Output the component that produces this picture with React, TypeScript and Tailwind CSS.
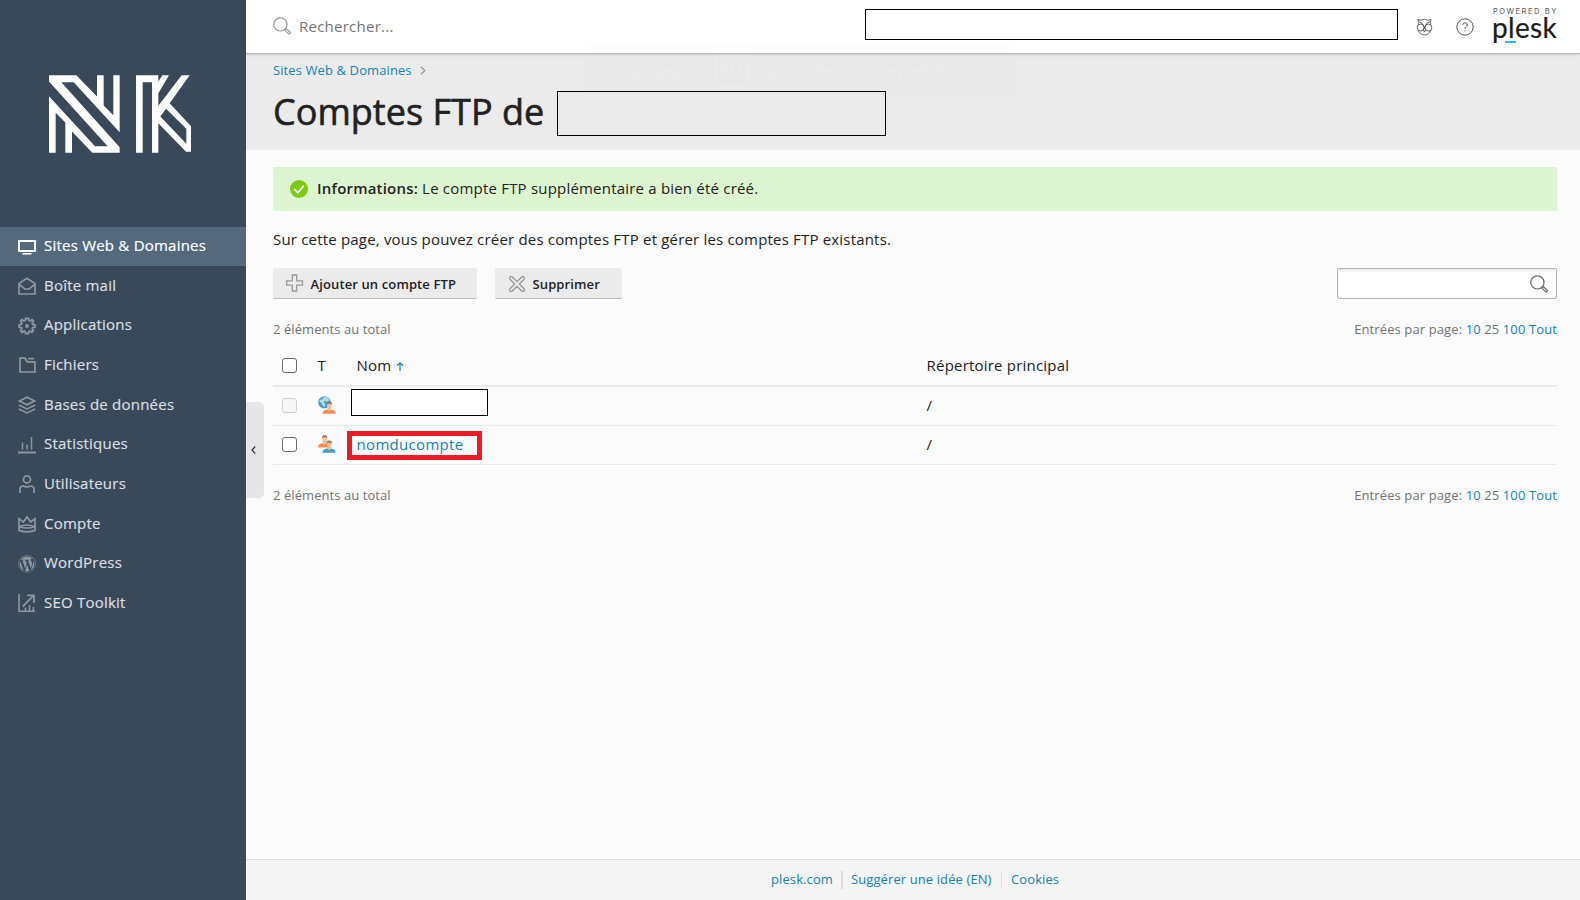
import type { ReactNode } from "react";
import { FaWordpress } from "react-icons/fa";

function Icon({ children, width = 1.7, className = "" }: { children: ReactNode; width?: number; className?: string }) {
  return (
    <svg
      viewBox="0 0 18 18"
      fill="none"
      stroke="currentColor"
      strokeWidth={width}
      className={`h-[18px] w-[18px] shrink-0 ${className}`}
    >
      {children}
    </svg>
  );
}

function Logo() {
  return (
    <svg viewBox="147 106 426 233" className="ml-[49px] h-[78px] w-[142px]" fill="#fff" fillRule="evenodd">
      <path d="M147 106H229L291 170V106H311V197L340 226V106H359V277L221 127H184L359 322V339H277L216 275V339H196V248L167 219V339H147V169L285 319H323L147 125Z" />
      <path d="M408 106H475V125L487 106H507L475 160V198L545 106H569L509 190L573 259V336H558L475 250V339H456V127H428V339H408ZM498 207L481 230L559 312V267Z" />
    </svg>
  );
}

const menu: { label: string; icon: ReactNode }[] = [
  {
    label: "Sites Web & Domaines",
    icon: (
      <Icon>
        <path d="M1 2.9H17V13H1Z" strokeWidth="2" />
        <path d="M4.5 15.8H13.5" strokeWidth="1.6" />
      </Icon>
    ),
  },
  {
    label: "Boîte mail",
    icon: (
      <Icon>
        <path d="M1 6.5L9 1.2L17 6.5V17H1Z" />
        <path d="M1.5 7.5L6.7 12H11.3L16.5 7.5" />
      </Icon>
    ),
  },
  {
    label: "Applications",
    icon: (
      <Icon width={1.9}>
        <path d="M7.6 1.4H10.4L10.9 3.4L12.2 4L14 2.8L15.4 4.2L14.2 6.1L14.7 7.4L16.8 7.8V10.2L14.7 10.7L14.2 12L15.3 13.7L13.9 15.2L12.1 14.1L10.8 14.6L10.4 16.6H7.6L7.2 14.6L5.9 14.1L4.1 15.2L2.7 13.7L3.8 12L3.3 10.7L1.2 10.2V7.8L3.3 7.4L3.8 6.1L2.7 4.2L4 2.8L5.9 4L7.2 3.4Z" />
        <circle cx="9" cy="9" r="2" fill="currentColor" stroke="none" />
      </Icon>
    ),
  },
  {
    label: "Fichiers",
    icon: (
      <Icon>
        <path d="M2 2.2H7L9.2 5.8H16.9V16H2Z" />
        <path d="M10.2 2.6H16" />
      </Icon>
    ),
  },
  {
    label: "Bases de données",
    icon: (
      <Icon>
        <path d="M1.4 5L9 1.3L16.6 5L9 8.7Z" />
        <path d="M0.8 9L9 12.9L17.2 9M0.8 13L9 16.9L17.2 13" />
      </Icon>
    ),
  },
  {
    label: "Statistiques",
    icon: (
      <Icon width={1.5}>
        <path d="M0 16.5H18" strokeWidth="2" />
        <path d="M4.5 6.5V13.5M9 8.5V13.5M13.5 1V13.5" />
      </Icon>
    ),
  },
  {
    label: "Utilisateurs",
    icon: (
      <Icon>
        <circle cx="9" cy="4.4" r="3.5" />
        <path d="M2 18V14.2Q2 11 5.2 11Q9 12.8 12.8 11Q16 11 16 14.2V18" />
      </Icon>
    ),
  },
  {
    label: "Compte",
    icon: (
      <Icon>
        <path d="M1 15.4V3.8L5.3 7L9 1.9L12.7 7L17 3.8V15.4Q9 18.4 1 15.4Z" />
        <path d="M1 11.7Q9 8.3 17 11.7Q9 14.3 1 11.7" />
      </Icon>
    ),
  },
  {
    label: "WordPress",
    icon: <FaWordpress className="h-[18px] w-[18px] shrink-0" />,
  },
  {
    label: "SEO Toolkit",
    icon: (
      <Icon width={1.6}>
        <path d="M1 0V17.2H17" />
        <path d="M4.8 12.5L15 2.2M9 1.4H16V9" strokeWidth="1.8" />
        <path d="M7.5 13.5V17M11.5 11V17M15.3 13V17" />
      </Icon>
    ),
  },
];

function Magnifier({ className }: { className: string }) {
  return (
    <svg viewBox="0 0 18 18" fill="none" stroke="currentColor" strokeWidth="1.2" className={`h-[18px] w-[18px] ${className}`}>
      <circle cx="7.4" cy="7.4" r="6.6" />
      <path d="M11.6 12.8L13 11.4L17.2 15.4Q17.4 17 15.8 17Z" />
    </svg>
  );
}

function Person({ x, y, color }: { x: number; y: number; color: string }) {
  return (
    <g transform={`translate(${x} ${y})`}>
      <path d="M0 12.6Q0 8.6 4.4 8.2H8.6Q13 8.6 13 12.6Z" fill={color} />
      <path d="M4.6 2.4H8.6V6.6L8 9Q6.6 10.4 5.2 9L4.6 6.6Z" fill="#f5bd97" />
      <path d="M4.1 3.8V1.6Q4.5 0.2 6.6 0.2Q8.8 0.2 9.2 1.6V3.8L8.3 2.6H5Z" fill="#8d7763" />
    </g>
  );
}

function MainUserIcon() {
  return (
    <svg viewBox="0 0 18 18" className="h-[18px] w-[18px]">
      <circle cx="6.4" cy="6.4" r="6.2" fill="#45a1cc" />
      <path d="M5 1.4L9 1L11.5 4L9 6L7 4.6L5.6 6.6L7.4 8L6.5 11L4.4 9.4L3.6 7L1 5.5L2.5 3.6L4.6 3.6Z" fill="#b4dbec" />
      <Person x={4.6} y={5.2} color="#fb8c50" />
    </svg>
  );
}

function SubUserIcon() {
  return (
    <svg viewBox="0 0 18 18" className="h-[18px] w-[18px]">
      <Person x={0} y={0} color="#fb8c50" />
      <Person x={4.6} y={5.2} color="#459fca" />
    </svg>
  );
}

function Checkbox({ disabled = false }: { disabled?: boolean }) {
  return (
    <span
      className={`block h-[15px] w-[15px] rounded-[3px] border ${
        disabled ? "border-[#cfcfcf] bg-[#f6f6f6]" : "border-[#6b6b6b] bg-white"
      }`}
    />
  );
}

function ListBar() {
  return (
    <div className="flex h-5 items-center justify-between text-[13px] text-[#737373]">
      <span className="tracking-[0.07px]">2 éléments au total</span>
      <span className="tracking-[0.11px]">
        Entrées par page: <a className="text-[#1483b1]">10</a> 25 <a className="text-[#1483b1]">100</a>{" "}
        <a className="text-[#1483b1]">Tout</a>
      </span>
    </div>
  );
}

export default function App() {
  return (
    <div className="flex h-[900px] w-[1580px] overflow-hidden bg-[#fbfbfb] font-['Open_Sans',sans-serif] text-[15px] tracking-[0.2px] text-[#222]">
      <aside className="flex w-[246px] shrink-0 flex-col bg-[#394959] pt-[75px]">
        <Logo />
        <nav className="mt-[74px] flex flex-col">
          {menu.map((item, i) => (
            <a
              key={item.label}
              className={`flex items-center pl-[17.5px] tracking-[0.22px] [-webkit-text-stroke:0.18px] ${
                i === 0 ? "h-[39px] bg-[#54697c] text-white" : "h-[39.7px] text-[#dcdfe2]"
              }`}
            >
              <span className={i === 0 ? "text-white" : "text-[#8c969f]"}>{item.icon}</span>
              <span className="-mt-[2px] ml-[8.5px]">{item.label}</span>
            </a>
          ))}
        </nav>
      </aside>

      <div className="relative flex min-w-0 flex-1 flex-col">
        <header className="z-10 flex h-[54px] shrink-0 items-center border-b border-[#b9b9b9] bg-white pl-[27px] shadow-[0_1px_2px_rgba(0,0,0,0.12)]">
          <Magnifier className="-mt-px text-[#999]" />
          <span className="ml-[8px] tracking-[0.25px] text-[#757575]">Rechercher...</span>
          <div className="mr-[18px] mb-[5px] ml-auto h-[31px] w-[533px] border border-black bg-white" />
          <svg viewBox="0 0 18 18" fill="none" stroke="#4a4a4a" strokeWidth="0.9" className="h-[18px] w-[17px]">
            <path d="M2 0.8Q4 2.2 6.2 1.6Q9 0.2 11.8 1.6Q14 2.2 16 0.8L14.9 4L15.6 6.6M2 0.8L3.1 4L2.4 6.6M3.6 3.6L6.6 5.2L9 9.4L11.4 5.2L14.4 3.6" />
            <circle cx="4.9" cy="9.6" r="3.7" />
            <circle cx="13.1" cy="9.6" r="3.7" />
            <path d="M9 9.4L7.8 12L9 14.2L10.2 12ZM2.6 12.7Q3.9 17.4 9 17.4Q14.1 17.4 15.4 12.7" />
          </svg>
          <svg viewBox="0 0 18 18" fill="none" stroke="#555" strokeWidth="1" className="ml-[22.5px] h-[18px] w-[18px]">
            <circle cx="9" cy="9" r="8.2" />
            <path d="M6.7 7Q6.8 4.8 9 4.8Q11.3 4.9 11.3 7Q11.2 8.2 9.8 9Q9 9.6 9 11M9 12.2V13.4" />
          </svg>
          <div className="mr-[22px] ml-[18.5px] flex h-[54px] w-[66px] flex-col pt-[8px]">
            <span className="h-[8px] pl-px font-['Inter',sans-serif] text-[7.5px] leading-[8px] tracking-[1.55px] whitespace-nowrap text-[#555]">
              POWERED BY
            </span>
            <span className="mt-[2px] h-[22px] font-['Lato',sans-serif] text-[28px] leading-[18px] tracking-[0.3px] whitespace-nowrap text-[#1c1c1c] [-webkit-text-stroke:0.2px]">
              plesk
            </span>
            <span className="mt-px ml-[13px] h-[2px] w-[11px] bg-[#28bce8]" />
          </div>
        </header>

        <div className="h-[96px] shrink-0 bg-[#ebebeb] pl-[27px]">
          <div className="flex h-[33px] items-center text-[13px] tracking-[0.1px] text-[#1483b1]">
            Sites Web & Domaines
            <svg viewBox="0 0 6 10" fill="none" stroke="#999" strokeWidth="1.3" className="ml-[8px] h-[9px] w-[6px]">
              <path d="M0.8 0.8L5 5L0.8 9.2" />
            </svg>
          </div>
          <div className="flex h-[49px] items-center">
            <h1 className="-mt-px w-[284px] shrink-0 text-[36px] leading-[49px] tracking-[0.03px] whitespace-nowrap [-webkit-text-stroke:0.6px]">
              Comptes FTP de
            </h1>
            <div className="mt-[4px] h-[45px] w-[329px] border border-black bg-[#ebebeb]" />
          </div>
        </div>

        <div className="absolute top-[45px] left-[339px] z-20 flex h-[50px] w-[430px] items-center justify-center gap-[9px] bg-black/[0.008] text-[14px] tracking-normal text-white/20">
          <span>Appuyez sur</span>
          <span className="border border-white/20 px-[5px] py-[4px]">F11</span>
          <span>pour quitter le mode plein écran.</span>
        </div>

        <main className="flex-1 pt-[17px] pr-[23px] pl-[27px]">
          <div className="flex h-[44px] items-center rounded-[2px] bg-[#dcf4d0] pl-[17px]">
            <svg viewBox="0 0 18 18" className="h-[18px] w-[18px]">
              <circle cx="9" cy="9" r="9" fill="#7ccb12" />
              <path d="M4.2 9.2L7.8 12.8L13.8 5.8" fill="none" stroke="#fff" strokeWidth="1.7" />
            </svg>
            <p className="-mt-[2px] ml-[9px]">
              <b className="font-semibold">Informations:</b> Le compte FTP supplémentaire a bien été créé.
            </p>
          </div>
          <p className="mt-[16px] h-[25px] leading-[24px] tracking-[0.185px]">
            Sur cette page, vous pouvez créer des comptes FTP et gérer les comptes FTP existants.
          </p>

          <div className="mt-[16px] flex h-[31px] text-[13px] font-semibold tracking-[0.12px]">
            <button className="flex w-[204px] items-center rounded-[2px] border-b border-[#bcbcbc] bg-[#ebebeb] pl-[13px]">
              <Icon width={1.3} className="text-[#999]">
                <path d="M6.3 1H10.7V6.8H16.5V11.2H10.7V17H6.3V11.2H0.6V6.8H6.3Z" />
              </Icon>
              <span className="mt-[3px] ml-[6.5px]">Ajouter un compte FTP</span>
            </button>
            <button className="ml-[18px] flex w-[127px] items-center rounded-[2px] border-b border-[#bcbcbc] bg-[#ebebeb] pl-[13px]">
              <Icon width={1.3} className="mt-px text-[#999]">
                <path d="M2.3 1.8Q3.5 1 4.3 2L9 6.7L13.7 2Q14.7 1 15.9 1.9Q17 3.2 16 4.3L11.3 9L16 13.7Q17 14.8 16 16Q14.7 17 13.7 16L9 11.3L4.3 16Q3.3 17 2 16Q1 14.8 2 13.7L6.7 9L2 4.3Q1 3 2.3 1.8Z" />
              </Icon>
              <span className="mt-[3px] ml-[6.5px]">Supprimer</span>
            </button>
            <div className="ml-auto flex w-[220px] items-center justify-end rounded-[2px] border border-[#b3b3b3] bg-white pr-[8px] shadow-[inset_0_2px_2px_#ececec]">
              <Magnifier className="text-[#666]" />
            </div>
          </div>

          <div className="mt-[21px]">
            <ListBar />
          </div>

          <div className="mt-[6px] flex h-[41px] items-center border-b-2 border-[#ebebeb]">
            <div className="w-[44.6px] pl-[9px]">
              <Checkbox />
            </div>
            <div className="w-[39px]">T</div>
            <div className="flex w-[570px] items-center">
              Nom
              <svg viewBox="0 0 8 10" fill="none" stroke="#1483b1" strokeWidth="1.3" className="mt-px ml-[5px] h-[9px] w-[8px]">
                <path d="M4 10V1M0.8 4.2L4 1L7.2 4.2" />
              </svg>
            </div>
            <div>Répertoire principal</div>
          </div>
          <div className="flex h-[39px] items-center border-b border-[#ebebeb] pb-[2px]">
            <div className="w-[45px] pl-[9px]">
              <Checkbox disabled />
            </div>
            <div className="w-[33px]">
              <MainUserIcon />
            </div>
            <div className="w-[575.6px]">
              <div className="mb-[5px] h-[27px] w-[137px] border border-black bg-white" />
            </div>
            <div>/</div>
          </div>
          <div className="flex h-[39px] items-center border-b border-[#ebebeb] pb-[2px]">
            <div className="w-[45px] pl-[9px]">
              <Checkbox />
            </div>
            <div className="w-[29px]">
              <SubUserIcon />
            </div>
            <div className="w-[579.6px]">
              <div className="mt-[3px] flex h-[29px] w-[135px] items-center border-[5px] border-[#ed1c24] pb-[3px] pl-[4.6px] tracking-[0.3px] text-[#1483b1]">
                nomducompte
              </div>
            </div>
            <div>/</div>
          </div>
          <div className="mt-[21px]">
            <ListBar />
          </div>
        </main>

        <footer className="flex h-[41px] shrink-0 items-center border-t border-[#dcdcdc] bg-[#f4f4f4] pl-[525px] text-[13px] tracking-[0.1px] text-[#1483b1]">
          <a className="w-[70px]">plesk.com</a>
          <span className="h-[18px] w-[2px] bg-[#dcdcdc]" />
          <a className="ml-[8px] w-[150px]">Suggérer une idée (EN)</a>
          <span className="h-[18px] w-px bg-[#dcdcdc]" />
          <a className="ml-[9px]">Cookies</a>
        </footer>

        <div className="absolute top-[402px] left-0 flex h-[96px] w-[18px] items-center rounded-r-[5px] bg-[#e6e6e6] pl-[5px]">
          <svg viewBox="0 0 5 8" fill="none" stroke="#333" strokeWidth="1.2" className="h-[8px] w-[5px]">
            <path d="M4.2 0.5L1 4L4.2 7.5" />
          </svg>
        </div>
      </div>
    </div>
  );
}
